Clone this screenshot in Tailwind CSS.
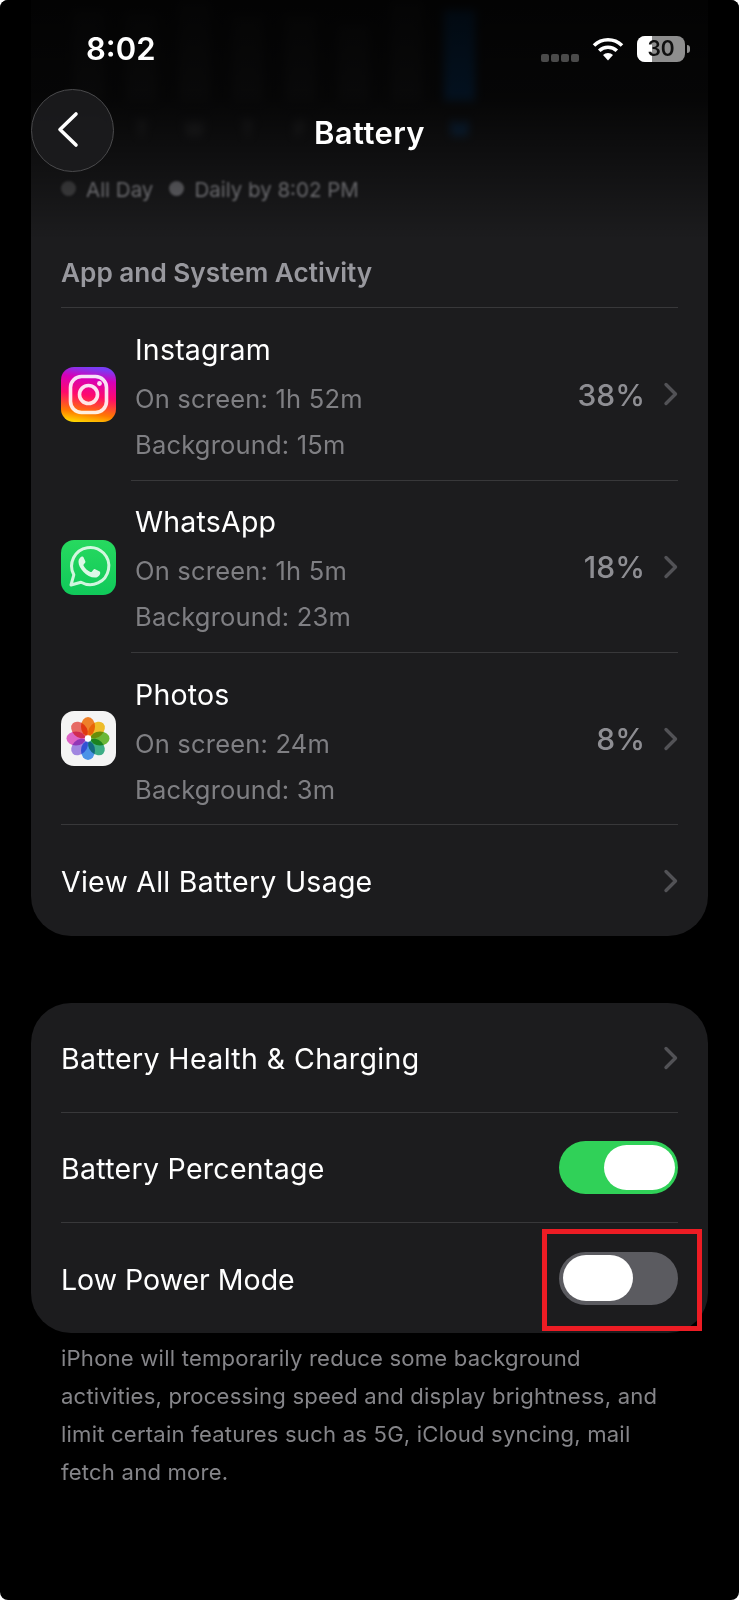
<!DOCTYPE html>
<html lang="en">
<head>
    <meta charset="UTF-8">
    <meta name="viewport" content="width=device-width, initial-scale=1.0">
    <title>Battery</title>
    <script src="https://cdn.jsdelivr.net/npm/@tailwindcss/browser@4"></script>
</head>
<body class="bg-white font-[family-name:Inter,sans-serif] text-white">
    <div class="relative w-[739px] h-[1600px] overflow-hidden bg-black rounded-[8px]">

        <!-- Settings content -->
        <main class="px-[31px]">
            <section class="bg-[#1c1c1e] rounded-b-[40px]">
                <!-- Usage chart, scrolled under the nav bar -->
                <div class="h-[178px] pl-[42px] flex gap-[22px] text-[20px] font-semibold text-[#48484a] text-center blur-[4px]">
                    <div class="w-[31px]"><div class="mt-[10px] h-[90px] bg-[#2c2c2e]"></div><p class="mt-[14px]">M</p></div>
                    <div class="w-[31px]"><div class="mt-[13px] h-[87px] bg-[#2c2c2e]"></div><p class="mt-[14px]">T</p></div>
                    <div class="w-[31px]"><div class="h-[100px] bg-[#2c2c2e]"></div><p class="mt-[14px]">W</p></div>
                    <div class="w-[31px]"><div class="mt-[15px] h-[85px] bg-[#2c2c2e]"></div><p class="mt-[14px]">T</p></div>
                    <div class="w-[31px]"><div class="mt-[15px] h-[85px] bg-[#2c2c2e]"></div><p class="mt-[14px]">F</p></div>
                    <div class="w-[31px]"><div class="mt-[25px] h-[75px] bg-[#2c2c2e]"></div></div>
                    <div class="w-[31px]"><div class="h-[100px] bg-[#2c2c2e]"></div></div>
                    <div class="w-[31px]"><div class="mt-[10px] h-[90px] bg-[#0a84ff]/55"></div><p class="mt-[14px] text-[#0a84ff]/55">M</p></div>
                </div>
                <div class="h-[24px] pl-[30px] flex items-center gap-[10px] text-[20.5px] text-[#8e8e93] blur-[1px]">
                    <span class="flex items-center gap-[10px]"><span class="w-[15px] h-[15px] mb-[3px] rounded-full bg-[#48484a]"></span>All Day</span>
                    <span class="flex items-center gap-[10px] ml-[6px]"><span class="w-[15px] h-[15px] mb-[3px] rounded-full bg-[#6e6e73]"></span>Daily by 8:02 PM</span>
                </div>

                <div class="px-[30px]">
                    <h2 class="mt-[48px] h-[58px] flex items-start text-[26.2px] leading-[46px] font-semibold text-[#98989e] border-b border-[#38383a]">App and System Activity</h2>
                </div>

                <!-- Instagram -->
                <div class="flex h-[173px] px-[30px]">
                    <div class="w-[70px] shrink-0 flex items-center">
                        <svg class="w-[55px] h-[55px]" viewBox="0 0 55 55">
                            <defs>
                                <linearGradient id="igBg" x1="0.3" y1="1" x2="0.45" y2="0">
                                    <stop offset="0" stop-color="#ffd600"/>
                                    <stop offset="0.18" stop-color="#ff7a00"/>
                                    <stop offset="0.5" stop-color="#ff0a6c"/>
                                    <stop offset="0.8" stop-color="#d700b8"/>
                                    <stop offset="1" stop-color="#7a3cf5"/>
                                </linearGradient>
                            </defs>
                            <rect width="55" height="55" rx="13" fill="url(#igBg)"/>
                            <rect x="9.5" y="9.5" width="36" height="36" rx="11" fill="none" stroke="#fff" stroke-opacity="0.88" stroke-width="3.6"/>
                            <circle cx="27.5" cy="27.5" r="9" fill="none" stroke="#fff" stroke-opacity="0.88" stroke-width="3.6"/>
                            <circle cx="38.5" cy="16.5" r="2.4" fill="#fff" fill-opacity="0.88"/>
                        </svg>
                    </div>
                    <div class="flex-1 flex items-center pl-[4px] border-b border-[#38383a]">
                        <div class="flex-1 pt-[6px]">
                            <p class="text-[28.5px] leading-[46px] tracking-[0.2px]">Instagram</p>
                            <p class="mt-[3px] text-[25.5px] leading-[46px] text-[#7f7f83] tracking-[0.2px]">On screen: 1h 52m</p>
                            <p class="text-[25.5px] leading-[46px] text-[#7f7f83] tracking-[0.2px]">Background: 15m</p>
                        </div>
                        <span class="pt-[2px] text-[30px] font-medium text-[#8e8e93]">38%</span>
                        <svg class="ml-[18px] w-[15px] h-[24px]" viewBox="0 0 15 24" fill="none"><path d="M3 2.5 L12.5 12 L3 21.5" stroke="#525256" stroke-width="3.4" stroke-linecap="round" stroke-linejoin="round"/></svg>
                    </div>
                </div>

                <!-- WhatsApp -->
                <div class="flex h-[172px] px-[30px]">
                    <div class="w-[70px] shrink-0 flex items-center">
                        <svg class="w-[55px] h-[55px]" viewBox="0 0 55 55">
                            <defs>
                                <linearGradient id="waBg" x1="0" y1="0" x2="0" y2="1">
                                    <stop offset="0" stop-color="#27d95f"/>
                                    <stop offset="1" stop-color="#10c95a"/>
                                </linearGradient>
                            </defs>
                            <rect width="55" height="55" rx="13" fill="url(#waBg)"/>
                            <path d="M10 45 L12.8 34.8 A18.6 18.6 0 1 1 20 42.2 Z" fill="none" stroke="#fff" stroke-opacity="0.8" stroke-width="3" stroke-linejoin="round"/>
                            <path d="M21.5 16.5 c-1.5 0 -4 2 -4 5.4 c0 6 8 15.6 16.4 15.6 c3.4 0 5.3 -2.8 5.3 -4.6 c0 -0.9 -0.3 -1.2 -1 -1.6 l-4 -2 c-0.8 -0.4 -1.3 -0.2 -1.8 0.4 l-1.6 2 c-0.4 0.4 -0.8 0.5 -1.4 0.2 c-3 -1.3 -5.2 -3.4 -6.8 -6.2 c-0.3 -0.6 -0.2 -1 0.2 -1.4 l1.3 -1.6 c0.4 -0.5 0.4 -0.9 0.2 -1.4 l-1.8 -4 c-0.3 -0.7 -0.6 -0.8 -1.4 -0.8 Z" fill="#fff" fill-opacity="0.85"/>
                        </svg>
                    </div>
                    <div class="flex-1 flex items-center pl-[4px] border-b border-[#38383a]">
                        <div class="flex-1 pt-[6px]">
                            <p class="text-[28.5px] leading-[46px] tracking-[0.2px]">WhatsApp</p>
                            <p class="mt-[3px] text-[25.5px] leading-[46px] text-[#7f7f83] tracking-[0.2px]">On screen: 1h 5m</p>
                            <p class="text-[25.5px] leading-[46px] text-[#7f7f83] tracking-[0.2px]">Background: 23m</p>
                        </div>
                        <span class="pt-[2px] text-[30px] font-medium text-[#8e8e93]">18%</span>
                        <svg class="ml-[18px] w-[15px] h-[24px]" viewBox="0 0 15 24" fill="none"><path d="M3 2.5 L12.5 12 L3 21.5" stroke="#525256" stroke-width="3.4" stroke-linecap="round" stroke-linejoin="round"/></svg>
                    </div>
                </div>

                <!-- Photos -->
                <div class="flex h-[171px] px-[30px]">
                    <div class="w-[70px] shrink-0 flex items-center">
                        <svg class="w-[55px] h-[55px]" viewBox="0 0 55 55">
                            <rect width="55" height="55" rx="13" fill="#f4f4f4"/>
                            <ellipse class="mix-blend-multiply" cx="27" cy="15.5" rx="7" ry="9.5" fill="#f9862b"/>
                            <ellipse class="mix-blend-multiply" cx="27" cy="15.5" rx="7" ry="9.5" fill="#f9c52b" transform="rotate(45 27 27.5)"/>
                            <ellipse class="mix-blend-multiply" cx="27" cy="15.5" rx="7" ry="9.5" fill="#6fc03a" transform="rotate(90 27 27.5)"/>
                            <ellipse class="mix-blend-multiply" cx="27" cy="15.5" rx="7" ry="9.5" fill="#3fb58c" transform="rotate(135 27 27.5)"/>
                            <ellipse class="mix-blend-multiply" cx="27" cy="15.5" rx="7" ry="9.5" fill="#4f9af2" transform="rotate(180 27 27.5)"/>
                            <ellipse class="mix-blend-multiply" cx="27" cy="15.5" rx="7" ry="9.5" fill="#a78cea" transform="rotate(225 27 27.5)"/>
                            <ellipse class="mix-blend-multiply" cx="27" cy="15.5" rx="7" ry="9.5" fill="#e768cf" transform="rotate(270 27 27.5)"/>
                            <ellipse class="mix-blend-multiply" cx="27" cy="15.5" rx="7" ry="9.5" fill="#f16f69" transform="rotate(315 27 27.5)"/>
                            <circle cx="27" cy="27.5" r="3.2" fill="#fff"/>
                        </svg>
                    </div>
                    <div class="flex-1 flex items-center pl-[4px]">
                        <div class="flex-1 pt-[7px]">
                            <p class="text-[28.5px] leading-[46px] tracking-[0.2px]">Photos</p>
                            <p class="mt-[3px] text-[25.5px] leading-[46px] text-[#7f7f83] tracking-[0.2px]">On screen: 24m</p>
                            <p class="text-[25.5px] leading-[46px] text-[#7f7f83] tracking-[0.2px]">Background: 3m</p>
                        </div>
                        <span class="pt-[2px] text-[30px] font-medium text-[#8e8e93]">8%</span>
                        <svg class="ml-[18px] w-[15px] h-[24px]" viewBox="0 0 15 24" fill="none"><path d="M3 2.5 L12.5 12 L3 21.5" stroke="#525256" stroke-width="3.4" stroke-linecap="round" stroke-linejoin="round"/></svg>
                    </div>
                </div>

                <div class="px-[30px]">
                    <div class="h-[112px] flex items-center justify-between border-t border-[#38383a]">
                        <span class="pt-[4px] text-[28.5px] tracking-[0.25px]">View All Battery Usage</span>
                        <svg class="w-[15px] h-[24px]" viewBox="0 0 15 24" fill="none"><path d="M3 2.5 L12.5 12 L3 21.5" stroke="#525256" stroke-width="3.4" stroke-linecap="round" stroke-linejoin="round"/></svg>
                    </div>
                </div>
            </section>

            <section class="mt-[67px] bg-[#1c1c1e] rounded-[40px] px-[30px]">
                <div class="h-[110px] flex items-center justify-between border-b border-[#38383a]">
                    <span class="pt-[4px] text-[28.5px] tracking-[0.4px]">Battery Health &amp; Charging</span>
                    <svg class="w-[15px] h-[24px]" viewBox="0 0 15 24" fill="none"><path d="M3 2.5 L12.5 12 L3 21.5" stroke="#525256" stroke-width="3.4" stroke-linecap="round" stroke-linejoin="round"/></svg>
                </div>
                <div class="h-[110px] flex items-center justify-between border-b border-[#38383a]">
                    <span class="pt-[4px] text-[28.5px] tracking-[0.3px]">Battery Percentage</span>
                    <div class="w-[119px] h-[53px] rounded-full bg-[#30d158] flex items-center justify-end pr-[3px]">
                        <div class="w-[71px] h-[45px] rounded-full bg-white"></div>
                    </div>
                </div>
                <div class="h-[110px] flex items-center justify-between">
                    <span class="pt-[4px] text-[28.5px]">Low Power Mode</span>
                    <div class="w-[119px] h-[53px] rounded-full bg-[#5b5b60] flex items-center pl-[4px]">
                        <div class="w-[70px] h-[46px] rounded-full bg-white"></div>
                    </div>
                </div>
            </section>

            <p class="mt-[6px] px-[30px] text-[22.1px] leading-[38px] text-[#858589] tracking-[0.2px]">iPhone will temporarily reduce some background activities, processing speed and display brightness, and limit certain features such as 5G, iCloud syncing, mail fetch and more.</p>
        </main>

        <!-- Fade of the scrolled content under the status and nav bars -->
        <div class="absolute inset-x-0 top-0 h-[240px] bg-gradient-to-b from-black/90 via-black/80 via-[40%] to-transparent"></div>

        <!-- Status bar -->
        <div class="absolute top-[30px] left-[86px] text-[31px] leading-[38px] font-semibold">8:02</div>
        <div class="absolute top-[36px] left-[541px] flex items-start">
            <div class="flex gap-[2px] mt-[18px]">
                <span class="w-[8px] h-[8px] rounded-[2px] bg-[#4a4a4a]"></span>
                <span class="w-[8px] h-[8px] rounded-[2px] bg-[#4a4a4a]"></span>
                <span class="w-[8px] h-[8px] rounded-[2px] bg-[#4a4a4a]"></span>
                <span class="w-[8px] h-[8px] rounded-[2px] bg-[#4a4a4a]"></span>
            </div>
            <svg class="ml-[13px] w-[32px] h-[25px]" viewBox="0 0 32 25" fill="none">
                <path d="M2 9.5 A20 20 0 0 1 30 9.5" stroke="#fff" stroke-width="3.6"/>
                <path d="M7.2 14.8 A12.6 12.6 0 0 1 24.8 14.8" stroke="#fff" stroke-width="3.6"/>
                <path d="M11 19 L16 24.6 L21 19 A7 7 0 0 0 11 19 Z" fill="#fff"/>
            </svg>
            <div class="ml-[13px] relative w-[48px] h-[26px] rounded-[8px] bg-[#8e8e8e] overflow-hidden flex items-center justify-center">
                <div class="absolute inset-y-0 left-0 w-[15px] bg-white"></div>
                <span class="relative text-[21px] font-semibold text-[#111]">30</span>
            </div>
            <div class="ml-[2px] mt-[9px] w-[3px] h-[8px] rounded-r-full bg-[#8e8e8e]"></div>
        </div>

        <!-- Nav bar -->
        <button class="absolute left-[31px] top-[89px] w-[83px] h-[83px] rounded-full bg-[#1c1c1e]/90 border border-[#4a4a4c] flex items-center justify-center pr-[10px] pb-[2px]">
            <svg class="w-[24px] h-[37px]" viewBox="0 0 24 37" fill="none"><path d="M20 3 L4 18.5 L20 34" stroke="#fff" stroke-width="3.6" stroke-linecap="round" stroke-linejoin="round"/></svg>
        </button>
        <h1 class="absolute inset-x-0 top-[114px] text-center text-[31px] leading-[38px] font-semibold tracking-[0.4px]">Battery</h1>

        <!-- Highlight box added to the screenshot -->
        <div class="absolute left-[542px] top-[1229px] w-[160px] h-[102px] border-[5px] border-[#ed1c24]"></div>
    </div>
</body>
</html>
